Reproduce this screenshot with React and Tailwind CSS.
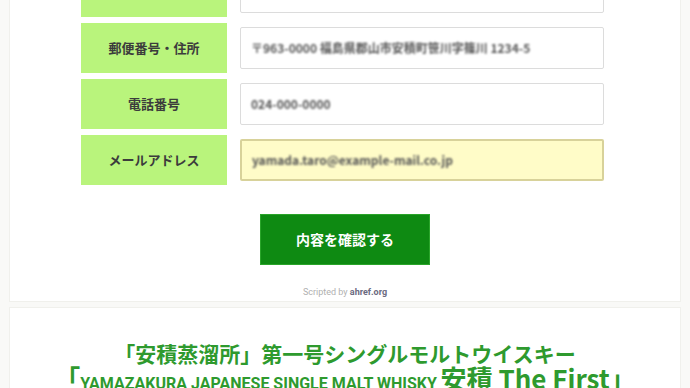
import React from 'react';

const rows = [
  { label: 'お名前', value: '山田 太郎 やまだ たろう' },
  { label: '郵便番号・住所', value: '〒963-0000 福島県郡山市安積町笹川字篠川 1234-5' },
  { label: '電話番号', value: '024-000-0000' },
  { label: 'メールアドレス', value: 'yamada.taro@example-mail.co.jp', active: true },
];

const jp = { fontFamily: '"Noto Sans CJK JP", "Noto Sans", sans-serif' };

const FormRow = ({ row }) => (
  <div className="flex items-center h-[50px] gap-[13px]">
    <div className="w-[146px] h-full bg-[#b9f47c] flex items-center justify-center text-[13px] font-bold text-[#3c3c3c]">
      {row.label}
    </div>
    <div
      className={
        'w-[364px] h-[42px] rounded-[2px] flex items-center px-[10px] overflow-hidden ' +
        (row.active ? 'bg-[#fffcc8] border-2 border-[#d8d29a]' : 'bg-white border border-[#dcdcdc]')
      }
    >
      <span className="text-[12px] font-bold text-[#555] blur-[1.3px] whitespace-nowrap">{row.value}</span>
    </div>
  </div>
);

export default function App() {
  return (
    <div className="w-[690px] h-[388px] overflow-hidden bg-[#f9f9f7] px-[9px]" style={jp}>
      <div className="bg-white border border-[#f0f0ec] mt-[-40px] pt-[6px] h-[342px] flex flex-col">
        <div className="pl-[71px] flex flex-col gap-[6px]">
          {rows.map((row) => (
            <FormRow key={row.label} row={row} />
          ))}
        </div>
        <div className="flex justify-center mt-[29px]">
          <button className="w-[170px] h-[51px] bg-[#0e8a12] border border-[#2aa52a] text-white text-[14px] font-bold">
            内容を確認する
          </button>
        </div>
        <p className="text-center mt-[21px] text-[9px] text-[#b0b0b0]" style={{ fontFamily: 'Roboto, sans-serif' }}>
          Scripted by <span className="font-bold text-[#6a6a80]">ahref.org</span>
        </p>
      </div>
      <div className="bg-white border border-[#f0f0ec] mt-[5px] h-[120px] pt-[33px] text-center text-[#2e9a2e] font-bold">
        <p className="text-[21px] leading-[24px]">「安積蒸溜所」第一号シングルモルトウイスキー</p>
        <p className="leading-[26px] whitespace-nowrap">
          <span className="text-[26px]">「</span>
          <span className="text-[16px]" style={{ fontFamily: '"Roboto", "Noto Sans CJK JP", sans-serif' }}>
            YAMAZAKURA JAPANESE SINGLE MALT WHISKY
          </span>{' '}
          <span className="text-[26px]">安積 The First</span>
          <span className="text-[26px]">」</span>
        </p>
      </div>
    </div>
  );
}
